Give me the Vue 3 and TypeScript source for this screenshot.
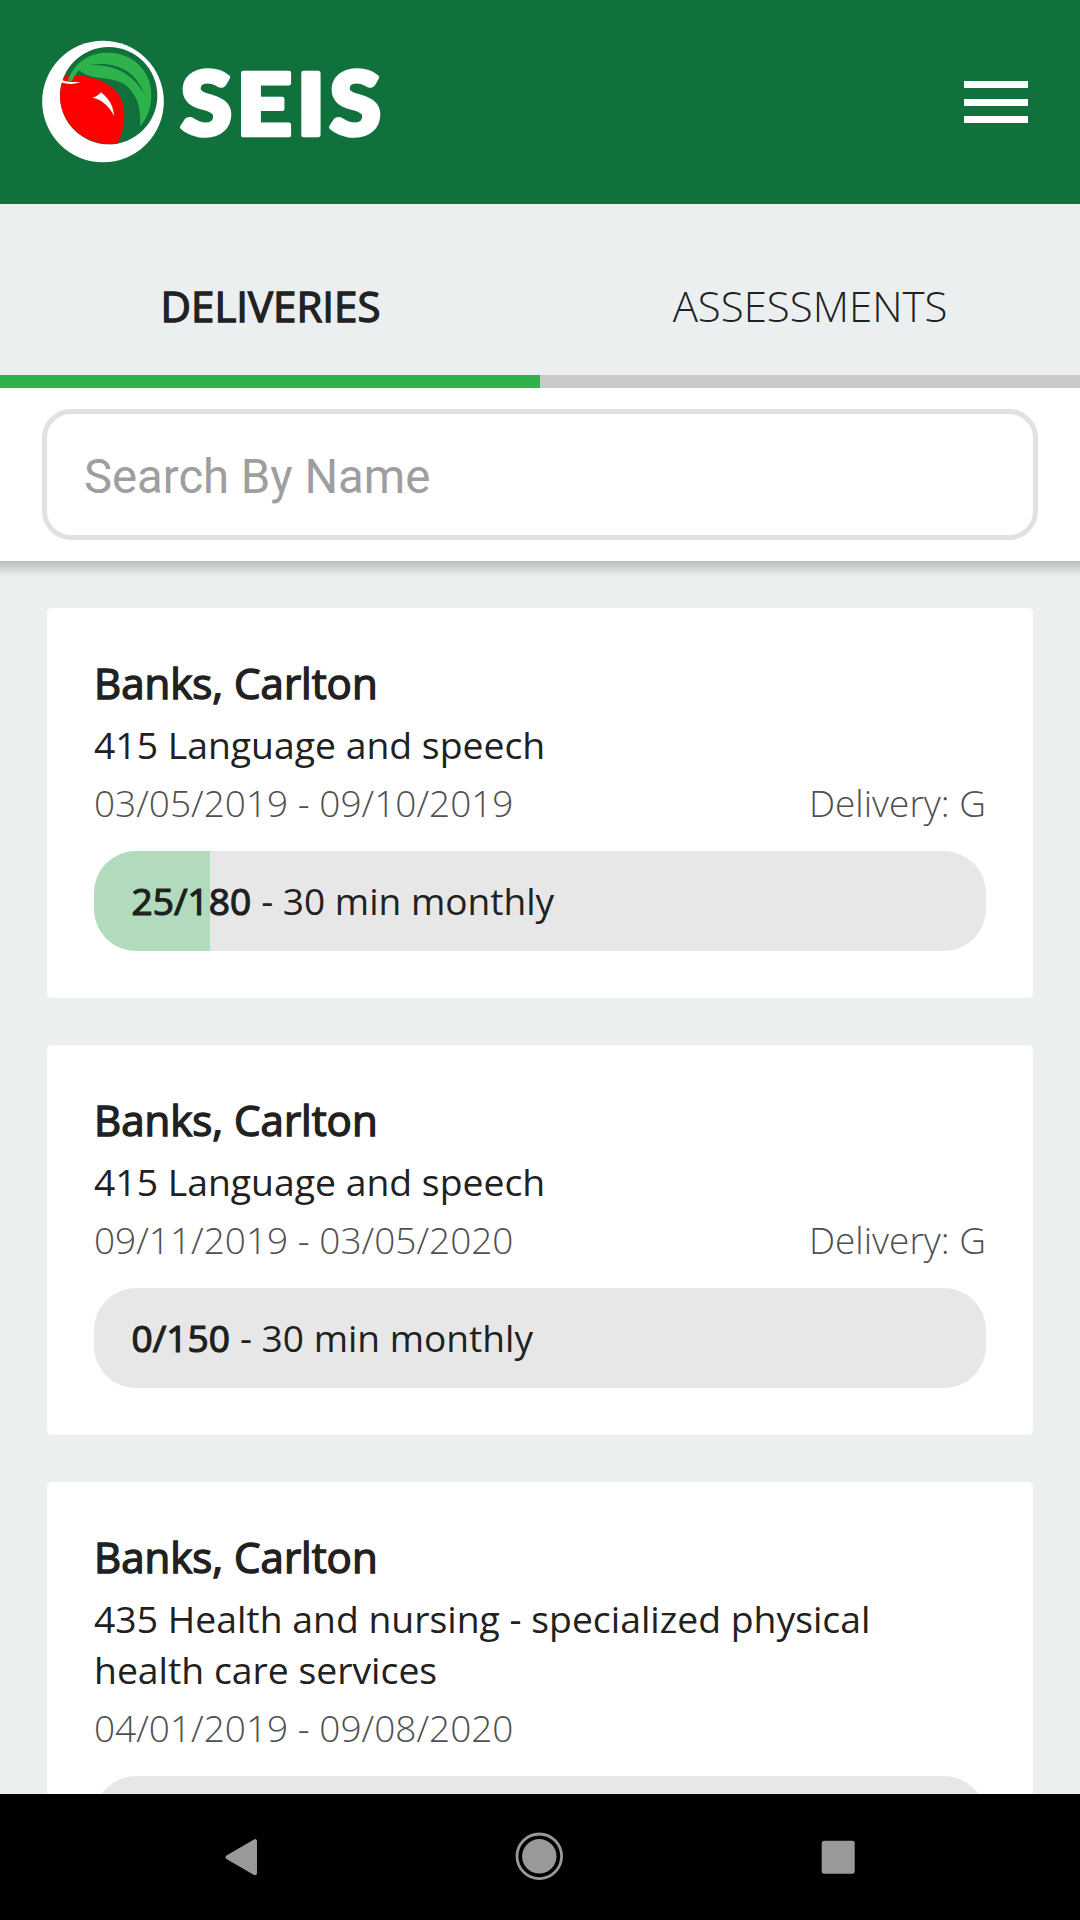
<script setup lang="ts">
interface Delivery {
  name: string
  service: string
  dates: string
  delivery?: string
  progress: string
  frequency: string
  percent: number
}

const tabs = [
  { label: 'DELIVERIES', active: true },
  { label: 'ASSESSMENTS', active: false },
]

const wordmark = [
  { char: 'S', x: 452, stretch: 1.07 },
  { char: 'E', x: 619, stretch: 1.12 },
  { char: 'I', x: 800, stretch: 1.08 },
  { char: 'S', x: 899, stretch: 1.07 },
]

const deliveries: Delivery[] = [
  {
    name: 'Banks, Carlton',
    service: '415 Language and speech',
    dates: '03/05/2019 - 09/10/2019',
    delivery: 'Delivery: G',
    progress: '25/180',
    frequency: '30 min monthly',
    percent: 13,
  },
  {
    name: 'Banks, Carlton',
    service: '415 Language and speech',
    dates: '09/11/2019 - 03/05/2020',
    delivery: 'Delivery: G',
    progress: '0/150',
    frequency: '30 min monthly',
    percent: 0,
  },
  {
    name: 'Banks, Carlton',
    service: '435 Health and nursing - specialized physical health care services',
    dates: '04/01/2019 - 09/08/2020',
    progress: '',
    frequency: '',
    percent: 0,
  },
]
</script>

<template>
  <div class="screen">
    <header class="header">
      <svg class="logo" viewBox="0 0 1110 450" width="370" height="150" aria-label="SEIS">
        <circle cx="219" cy="214.500" r="182.500" fill="#fff" />
        <circle cx="236" cy="197" r="146" fill="#11713c" />
        <path d="M108 134C150 134 192 141 222 157C262 178 283 210 283 252C283 286 275 317 263 341C170 353 90 285 90 197C90 174 97 151 108 134Z" fill="#f00" />
        <path d="M113 153C124 120 147 95 170 83C190 72 210 68 236 68C309 68 364 124 364 194C364 233 352 264 330 288C334 234 320 196 294 172C254 134 187 155 148 121C137 131 130 142 126 153Z" fill="#2eb34c" />
        <path d="M180 104C265 94 319 126 344 195C314 138 263 104 180 104Z" fill="#11713c" />
        <path d="M93 149C112 157 131 156 151 156C132 164 112 163 94 157Z" fill="#fff" />
        <path d="M187 203C199 200 207 195 213 187C237 206 251 229 252 258C239 231 220 210 187 203Z" fill="#fff" />
        <text
          v-for="(letter, i) in wordmark"
          :key="i"
          class="wordmark"
          :transform="`translate(${letter.x} 315) scale(${letter.stretch} 1)`"
        >{{ letter.char }}</text>
      </svg>
      <button class="menu" aria-label="Menu">
        <span></span><span></span><span></span>
      </button>
    </header>

    <nav class="tabs">
      <div v-for="tab in tabs" :key="tab.label" class="tab" :class="{ active: tab.active }">
        {{ tab.label }}
      </div>
    </nav>

    <div class="search">
      <input class="search-input" type="text" placeholder="Search By Name" />
    </div>

    <main class="list">
      <article v-for="(item, i) in deliveries" :key="i" class="card">
        <h2 class="name">{{ item.name }}</h2>
        <p class="service">{{ item.service }}</p>
        <div class="meta">
          <span>{{ item.dates }}</span>
          <span v-if="item.delivery">{{ item.delivery }}</span>
        </div>
        <div class="bar">
          <div class="fill" :style="{ width: item.percent + '%' }"></div>
          <div v-if="item.progress" class="bar-text"><b>{{ item.progress }}</b> - {{ item.frequency }}</div>
        </div>
      </article>
    </main>

    <footer class="system-nav">
      <svg viewBox="0 0 1080 126" width="1080" height="126">
        <path d="M227.500 63.200L255 47.200V79.200Z" fill="#999" stroke="#999" stroke-width="4" stroke-linejoin="round" />
        <circle cx="539.300" cy="62.300" r="22.300" fill="none" stroke="#999" stroke-width="2.800" />
        <circle cx="539.300" cy="62.300" r="17.200" fill="#999" />
        <rect x="821.700" y="46.700" width="33" height="33" rx="2.500" fill="#999" />
      </svg>
    </footer>
  </div>
</template>

<style>
body {
  margin: 0;
}
</style>

<style scoped>
.screen {
  width: 1080px;
  height: 1920px;
  display: flex;
  flex-direction: column;
  overflow: hidden;
  background: #ebeff0;
  color: #212121;
  font-family: "Open Sans", "Noto Sans", sans-serif;
}

.header {
  flex: none;
  box-sizing: border-box;
  height: 204px;
  padding: 30px 52px 0 30px;
  display: flex;
  justify-content: space-between;
  align-items: flex-start;
  background: #11713c;
}

.logo {
  display: block;
}

.wordmark {
  font-family: Lato, sans-serif;
  font-weight: 900;
  font-size: 260px;
  fill: #fff;
  stroke: #fff;
  stroke-width: 14px;
  stroke-linejoin: round;
}

.menu {
  display: flex;
  flex-direction: column;
  gap: 10.500px;
  margin: 51px 0 0;
  padding: 0;
  border: 0;
  background: none;
}

.menu span {
  width: 64px;
  height: 7px;
  background: #fff;
}

.tabs {
  flex: none;
  display: flex;
  height: 184px;
}

.tab {
  flex: 1;
  box-sizing: border-box;
  padding-top: 72px;
  border-bottom: 13px solid #c9c9c9;
  text-align: center;
  font-size: 42px;
  line-height: 60px;
  font-weight: 300;
}

.tab.active {
  border-bottom-color: #2eb34c;
  font-weight: 400;
  text-indent: 1px;
  -webkit-text-stroke: 1.300px #212121;
}

.search {
  flex: none;
  position: relative;
  box-sizing: border-box;
  height: 173px;
  padding: 21px 42px;
  background: #fff;
}

.search::after {
  content: "";
  position: absolute;
  top: 100%;
  left: 0;
  right: 0;
  height: 16px;
  background: linear-gradient(rgba(0, 0, 0, 0.21), rgba(0, 0, 0, 0.09) 55%, transparent);
}

.search-input {
  display: block;
  box-sizing: border-box;
  width: 100%;
  height: 131px;
  padding: 5px 37px 0;
  border: 5px solid #e1e1e1;
  border-radius: 29px;
  background: #fff;
  font-family: Roboto, sans-serif;
  font-size: 47.250px;
  outline: none;
}

.search-input::placeholder {
  color: #9e9e9e;
  opacity: 1;
}

.list {
  flex: 1;
  min-height: 0;
  overflow: hidden;
  display: flex;
  flex-direction: column;
  gap: 47px;
  padding: 47px 47px 0;
}

.card {
  flex: none;
  box-sizing: border-box;
  min-height: 390px;
  padding: 47px;
  border-radius: 5px;
  background: #fff;
}

.name {
  margin: 0;
  font-size: 42px;
  line-height: 56px;
  font-weight: 400;
  -webkit-text-stroke: 1.400px #212121;
}

.service {
  margin: 8px 0 0;
  font-size: 37.350px;
  line-height: 51px;
}

.meta {
  display: flex;
  justify-content: space-between;
  margin-top: 7px;
  font-size: 37px;
  line-height: 51px;
  font-weight: 300;
  color: #505050;
}

.bar {
  display: grid;
  height: 100px;
  margin-top: 23px;
  border-radius: 42px;
  overflow: hidden;
  background: #e7e7e7;
}

.fill,
.bar-text {
  grid-area: 1 / 1;
}

.fill {
  background: #b1dbbc;
}

.bar-text {
  padding-left: 37.500px;
  font-size: 37.100px;
  line-height: 100px;
}

.bar-text b {
  font-weight: 400;
  margin-right: 0.500px;
  -webkit-text-stroke: 1.200px #1b1f1c;
}

.system-nav {
  flex: none;
  height: 126px;
  background: #000;
}

.system-nav svg {
  display: block;
}
</style>
